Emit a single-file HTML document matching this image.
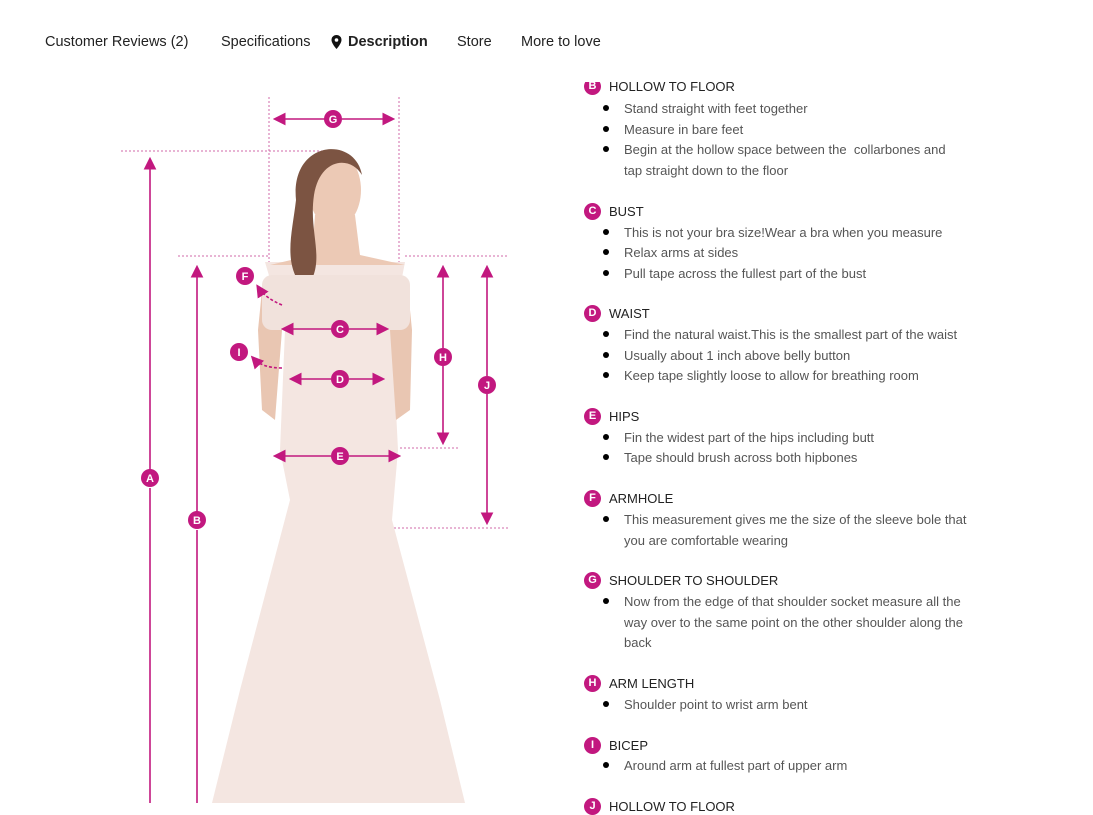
<!DOCTYPE html>
<html><head><style>
body{margin:0;width:1093px;height:803px;overflow:hidden;background:#fff;font-family:"Liberation Sans",sans-serif;position:relative}
.nav{position:absolute;top:34px;font-size:14.5px;color:#222;white-space:nowrap}
.r{position:absolute;font-size:13px;color:#555;white-space:nowrap}
.h{position:absolute;font-size:13px;color:#222;white-space:nowrap}
.c{position:absolute;width:17px;height:17px;border-radius:50%;background:#c2187f;color:#fff;font-size:11px;font-weight:bold;text-align:center;line-height:17px}
.b{position:absolute;width:6px;height:6px;border-radius:50%;background:#000}
</style></head><body>
<div class="nav" style="left:45px">Customer Reviews (2)</div>
<div class="nav" style="left:221px">Specifications</div>
<svg style="position:absolute;left:331px;top:35px" width="11" height="14" viewBox="0 0 11 14"><path d="M5.5 0C2.5 0 .5 2.2.5 5c0 3.5 5 9 5 9s5-5.5 5-9C10.5 2.2 8.5 0 5.5 0z" fill="#111"/><circle cx="5.5" cy="5" r="1.8" fill="#fff"/></svg>
<div class="nav" style="left:348px;font-weight:bold">Description</div>
<div class="nav" style="left:457px">Store</div>
<div class="nav" style="left:521px">More to love</div>

<svg style="position:absolute;left:0;top:0" width="560" height="803">
<defs><marker id="a" markerWidth="8" markerHeight="8" refX="6" refY="4" orient="auto"><path d="M0 0L8 4L0 8z" fill="#c2187f"/></marker></defs>
<g stroke="#d06aa8" stroke-width="1" stroke-dasharray="2 2" fill="none">
<path d="M269 97V262M399 97V262M121 151H330M178 256H268M405 256H508M400 448H460M390 528H510"/>
</g>
<path d="M290 500 L280 450 L285 330 L265 262 L405 262 L392 330 L398 450 L392 520 L440 700 L465 803 L212 803 L240 690 Z" fill="#f4e6e1"/>
<path d="M262 290 L258 330 L262 410 L275 420 L282 330 Z M408 290 L412 330 L410 410 L396 420 L390 330 Z" fill="#e9c6b2"/>
<path d="M315 215 L312 255 L270 265 L405 265 L360 255 L355 215 Z" fill="#ecc9b5"/>
<ellipse cx="335" cy="190" rx="26" ry="38" fill="#ecc9b5"/>
<path d="M296 200 C290 140 355 135 362 175 C350 155 320 158 314 195 C308 235 328 262 305 290 C282 265 292 235 296 200Z" fill="#7c5442"/>
<rect x="262" y="275" width="148" height="55" fill="#f1e2dc" rx="10"/>
<g stroke="#c2187f" stroke-width="1.6" fill="none">
<path d="M150 470V160" marker-end="url(#a)"/><path d="M150 488V803"/>
<path d="M197 512V268" marker-end="url(#a)"/><path d="M197 530V803"/>
<path d="M325 119H276" marker-end="url(#a)"/><path d="M342 119H392" marker-end="url(#a)"/>
<path d="M443 348V268" marker-end="url(#a)"/><path d="M443 366V442" marker-end="url(#a)"/>
<path d="M487 376V268" marker-end="url(#a)"/><path d="M487 394V522" marker-end="url(#a)"/>
<path d="M331 329H284" marker-end="url(#a)"/><path d="M349 329H386" marker-end="url(#a)"/>
<path d="M331 379H292" marker-end="url(#a)"/><path d="M349 379H382" marker-end="url(#a)"/>
<path d="M331 456H276" marker-end="url(#a)"/><path d="M349 456H398" marker-end="url(#a)"/>
<path d="M282 305 Q265 298 258 287" stroke-dasharray="3 2" marker-end="url(#a)"/>
<path d="M282 368 Q262 368 253 358" stroke-dasharray="3 2" marker-end="url(#a)"/>
</g>
<g font-size="11" font-weight="bold" fill="#fff" text-anchor="middle" font-family="Liberation Sans">
<circle cx="150" cy="478" r="9" fill="#c2187f"/><text x="150" y="482">A</text>
<circle cx="197" cy="520" r="9" fill="#c2187f"/><text x="197" y="524">B</text>
<circle cx="333" cy="119" r="9" fill="#c2187f"/><text x="333" y="123">G</text>
<circle cx="443" cy="357" r="9" fill="#c2187f"/><text x="443" y="361">H</text>
<circle cx="487" cy="385" r="9" fill="#c2187f"/><text x="487" y="389">J</text>
<circle cx="340" cy="329" r="9" fill="#c2187f"/><text x="340" y="333">C</text>
<circle cx="340" cy="379" r="9" fill="#c2187f"/><text x="340" y="383">D</text>
<circle cx="340" cy="456" r="9" fill="#c2187f"/><text x="340" y="460">E</text>
<circle cx="245" cy="276" r="9" fill="#c2187f"/><text x="245" y="280">F</text>
<circle cx="239" cy="352" r="9" fill="#c2187f"/><text x="239" y="356">I</text>
</g>
</svg>

<div class="c" style="left:584px;top:78px">B</div><div class="h" style="left:609px;top:79px">HOLLOW TO FLOOR</div>
<div style="position:absolute;left:570px;top:60px;width:300px;height:22px;background:#fff"></div>
<div class="b" style="left:603px;top:105px"></div><div class="r" style="left:624px;top:101px">Stand straight with feet together</div>
<div class="b" style="left:603px;top:126px"></div><div class="r" style="left:624px;top:122px">Measure in bare feet</div>
<div class="b" style="left:603px;top:146px"></div><div class="r" style="left:624px;top:142px">Begin at the hollow space between the&nbsp; collarbones and</div>
<div class="r" style="left:624px;top:163px">tap straight down to the floor</div>

<div class="c" style="left:584px;top:203px">C</div><div class="h" style="left:609px;top:204px">BUST</div>
<div class="b" style="left:603px;top:229px"></div><div class="r" style="left:624px;top:225px">This is not your bra size!Wear a bra when you measure</div>
<div class="b" style="left:603px;top:249px"></div><div class="r" style="left:624px;top:245px">Relax arms at sides</div>
<div class="b" style="left:603px;top:270px"></div><div class="r" style="left:624px;top:266px">Pull tape across the fullest part of the bust</div>

<div class="c" style="left:584px;top:305px">D</div><div class="h" style="left:609px;top:306px">WAIST</div>
<div class="b" style="left:603px;top:331px"></div><div class="r" style="left:624px;top:327px">Find the natural waist.This is the smallest part of the waist</div>
<div class="b" style="left:603px;top:352px"></div><div class="r" style="left:624px;top:348px">Usually about 1 inch above belly button</div>
<div class="b" style="left:603px;top:372px"></div><div class="r" style="left:624px;top:368px">Keep tape slightly loose to allow for breathing room</div>

<div class="c" style="left:584px;top:408px">E</div><div class="h" style="left:609px;top:409px">HIPS</div>
<div class="b" style="left:603px;top:434px"></div><div class="r" style="left:624px;top:430px">Fin the widest part of the hips including butt</div>
<div class="b" style="left:603px;top:454px"></div><div class="r" style="left:624px;top:450px">Tape should brush across both hipbones</div>

<div class="c" style="left:584px;top:490px">F</div><div class="h" style="left:609px;top:491px">ARMHOLE</div>
<div class="b" style="left:603px;top:516px"></div><div class="r" style="left:624px;top:512px">This measurement gives me the size of the sleeve bole that</div>
<div class="r" style="left:624px;top:533px">you are comfortable wearing</div>

<div class="c" style="left:584px;top:572px">G</div><div class="h" style="left:609px;top:573px">SHOULDER TO SHOULDER</div>
<div class="b" style="left:603px;top:598px"></div><div class="r" style="left:624px;top:594px">Now from the edge of that shoulder socket measure all the</div>
<div class="r" style="left:624px;top:615px">way over to the same point on the other shoulder along the</div>
<div class="r" style="left:624px;top:635px">back</div>

<div class="c" style="left:584px;top:675px">H</div><div class="h" style="left:609px;top:676px">ARM LENGTH</div>
<div class="b" style="left:603px;top:701px"></div><div class="r" style="left:624px;top:697px">Shoulder point to wrist arm bent</div>

<div class="c" style="left:584px;top:737px">I</div><div class="h" style="left:609px;top:738px">BICEP</div>
<div class="b" style="left:603px;top:762px"></div><div class="r" style="left:624px;top:758px">Around arm at fullest part of upper arm</div>
<div class="c" style="left:584px;top:798px">J</div><div class="h" style="left:609px;top:799px">HOLLOW TO FLOOR</div>
</body></html>
